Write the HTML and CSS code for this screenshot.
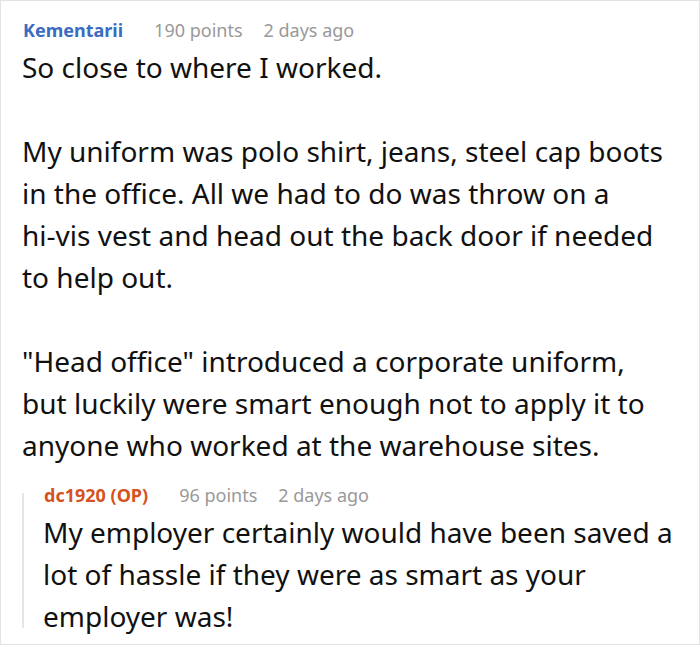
FILE: index.html
```html
<!DOCTYPE html>
<html>
<head>
<meta charset="utf-8">
<link rel="stylesheet" href="styles.css">
</head>
<body>
<div class="frame">
  <div class="comment">
    <div class="meta">
      <span class="author">Kementarii</span>
      <span class="info">190 points</span>
      <span class="info">2 days ago</span>
    </div>
    <div class="body">
      <p>So close to where I worked.</p>
      <p>My uniform was polo shirt, jeans, steel cap boots in the office. All we had to do was throw on a <span class="nw">hi-vis</span> vest and head out the back door if needed to help out.</p>
      <p>"Head office" introduced a corporate uniform, but luckily were smart enough not to apply it to anyone who worked at the warehouse sites.</p>
    </div>
    <div class="reply">
      <div class="meta">
        <span class="author op">dc1920 (OP)</span>
        <span class="info">96 points</span>
        <span class="info">2 days ago</span>
      </div>
      <div class="body">
        <p>My employer certainly would have been saved a lot of hassle if they were as smart as your employer was!</p>
      </div>
    </div>
  </div>
</div>
</body>
</html>
```
FILE: styles.css
```css
html, body {
  margin: 0;
  padding: 0;
  background: #fff;
}
.frame {
  width: 700px;
  height: 645px;
  box-sizing: border-box;
  border: 1px solid #e3e3e3;
  overflow: hidden;
  font-family: "Noto Sans", "Open Sans", sans-serif;
  color: #111;
}
.comment {
  padding: 17px 25px 0 21px;
}
.meta {
  display: flex;
  gap: 21px;
  font-size: 18px;
  line-height: 24px;
  margin-bottom: 4px;
  padding-left: 1px;
}
.author {
  font-weight: bold;
  color: #3a6cbf;
  margin-right: 10px;
}
.author.op {
  color: #d4531f;
}
.info {
  color: #999;
}
.body {
  font-size: 28px;
  line-height: 42px;
}
.body p {
  margin: 0 0 42px;
}
.body p:last-child {
  margin-bottom: 0;
}
.nw {
  white-space: nowrap;
}
.reply {
  position: relative;
  margin-top: 17px;
  padding-left: 21px;
}
.reply::before {
  content: "";
  position: absolute;
  left: 0;
  top: 10px;
  bottom: 9px;
  width: 2px;
  background: #e6e6e6;
}
```
